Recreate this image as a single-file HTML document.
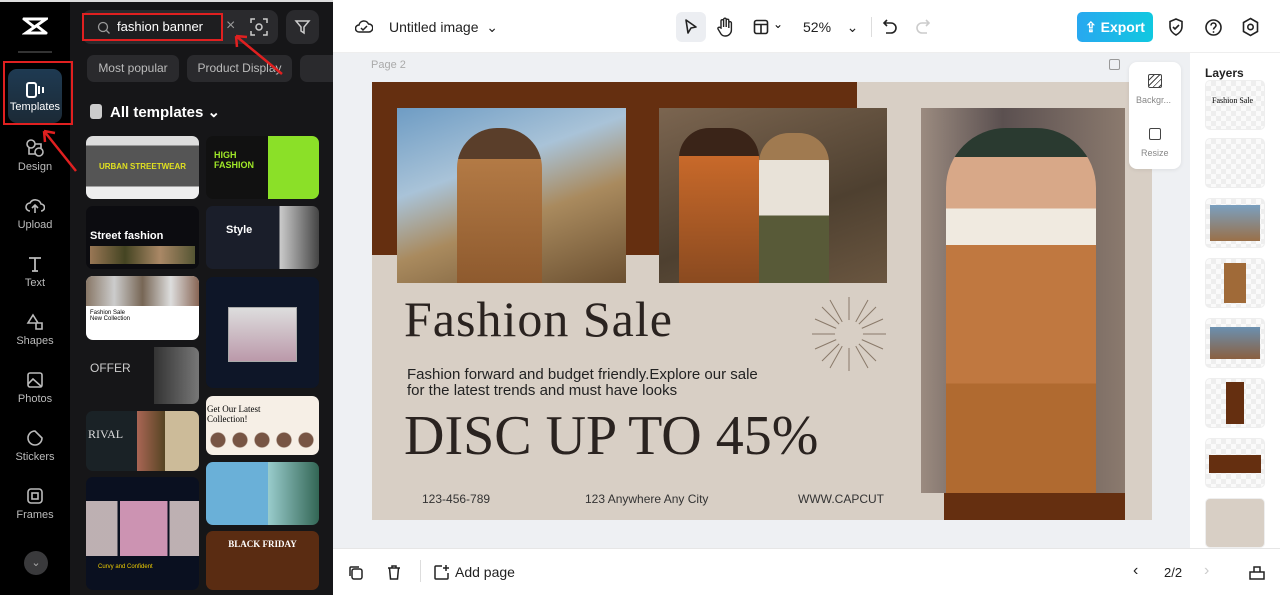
<!DOCTYPE html>
<html><head><meta charset="utf-8"><style>
*{margin:0;padding:0;box-sizing:border-box}
body{width:1280px;height:595px;overflow:hidden;font-family:"Liberation Sans",sans-serif;background:#fff;position:relative}
.a{position:absolute}
.rail{left:0;top:0;width:70px;height:595px;background:#000}
.panel{left:70px;top:0;width:263px;height:595px;background:#161618}
.ri{position:absolute;left:0;width:70px;text-align:center;color:#bbb;font-size:11px}
.ri svg{display:block;margin:0 auto 3px}
.chip{position:absolute;top:55px;height:27px;border-radius:7px;background:#2a2a2d;color:#bbb;font-size:12px;line-height:27px;text-align:center}
.t{position:absolute;border-radius:7px;overflow:hidden}
.top{left:333px;top:0;width:947px;height:53px;background:#fff;border-bottom:1px solid #eee}
.canvas{left:333px;top:53px;width:857px;height:495px;background:#eef0f3}
.bot{left:333px;top:548px;width:947px;height:47px;background:#fff;border-top:1px solid #e6e6e6}
.layers{left:1190px;top:53px;width:90px;height:495px;background:#fff}
.ly{position:absolute;left:1205px;width:60px;height:50px;border-radius:5px;background:repeating-conic-gradient(#eee 0 25%,#fafafa 0 50%) 0 0/10px 10px;border:1px solid #eee}
.red{position:absolute;border:2px solid #e02020}
</style></head><body>
<div class="a rail"></div>
<div class="a panel"></div>
<div class="a" style="left:0;top:0;width:333px;height:2px;background:#ddd"></div>
<svg class="a" style="left:22px;top:16px" width="26" height="20" viewBox="0 0 26 20"><path d="M2 3h22L4 17h20M2 3l9 7M24 17l-9-7" stroke="#fff" stroke-width="3" fill="none" stroke-linecap="round"/></svg>
<div class="a" style="left:18px;top:51px;width:34px;height:2px;background:#333"></div>
<div class="a" style="left:8px;top:69px;width:54px;height:54px;border-radius:9px;background:linear-gradient(#1e3a52,#1c2a36)"></div>
<div class="ri" style="top:82px;color:#fff"><svg width="20" height="16" viewBox="0 0 20 16"><rect x="2" y="1" width="9" height="14" rx="2" stroke="#fff" stroke-width="2" fill="none"/><path d="M14 4v8M18 5v6" stroke="#fff" stroke-width="2"/></svg>Templates</div>
<div class="red" style="left:3px;top:61px;width:70px;height:64px"></div>
<div class="ri" style="top:138px"><svg width="20" height="20" viewBox="0 0 20 20"><circle cx="6" cy="6" r="4" stroke="#bbb" stroke-width="1.6" fill="none"/><circle cx="14" cy="14" r="4" stroke="#bbb" stroke-width="1.6" fill="none"/><path d="M10 6h6v4M4 10v6h6" stroke="#bbb" stroke-width="1.6" fill="none"/></svg>Design</div>
<div class="ri" style="top:196px"><svg width="20" height="20" viewBox="0 0 20 20"><path d="M5 15a4 4 0 010-8 6 6 0 0111 1 3.5 3.5 0 010 7M10 17v-7M7 12l3-3 3 3" stroke="#bbb" stroke-width="1.6" fill="none"/></svg>Upload</div>
<div class="ri" style="top:254px"><svg width="20" height="20" viewBox="0 0 20 20"><path d="M4 4h12M10 4v13M7 17h6" stroke="#bbb" stroke-width="1.8" fill="none"/></svg>Text</div>
<div class="ri" style="top:312px"><svg width="20" height="20" viewBox="0 0 20 20"><path d="M8 3l5 8H3zM11 11h6v6h-6z" stroke="#bbb" stroke-width="1.6" fill="none"/></svg>Shapes</div>
<div class="ri" style="top:370px"><svg width="20" height="20" viewBox="0 0 20 20"><rect x="3" y="3" width="14" height="14" rx="2" stroke="#bbb" stroke-width="1.6" fill="none"/><path d="M3 14l5-5 9 8" stroke="#bbb" stroke-width="1.6" fill="none"/></svg>Photos</div>
<div class="ri" style="top:428px"><svg width="20" height="20" viewBox="0 0 20 20"><path d="M10 3a7 7 0 107 7l-7-7z" stroke="#bbb" stroke-width="1.6" fill="none"/></svg>Stickers</div>
<div class="ri" style="top:486px"><svg width="20" height="20" viewBox="0 0 20 20"><rect x="3" y="3" width="14" height="14" rx="3" stroke="#bbb" stroke-width="1.6" fill="none"/><rect x="7" y="7" width="6" height="6" stroke="#bbb" stroke-width="1.6" fill="none"/></svg>Frames</div>
<div class="a" style="left:24px;top:551px;width:24px;height:24px;border-radius:50%;background:#3a3a3c;color:#aaa;font-size:11px;text-align:center;line-height:24px">⌄</div>
<div class="a" style="left:82px;top:10px;width:196px;height:34px;border-radius:9px;background:#2a2a2d"></div>
<div class="red" style="left:82px;top:13px;width:141px;height:28px;background:#1e1e20"></div>
<svg class="a" style="left:97px;top:21px" width="14" height="14" viewBox="0 0 14 14"><circle cx="6" cy="6" r="4.5" stroke="#999" stroke-width="1.3" fill="none"/><path d="M9.5 9.5l3 3" stroke="#999" stroke-width="1.3"/></svg>
<div class="a" style="left:117px;top:19px;color:#fff;font-size:13px">fashion banner</div>
<div class="a" style="left:226px;top:17px;color:#999;font-size:16px">×</div>
<svg class="a" style="left:250px;top:18px" width="18" height="18" viewBox="0 0 18 18"><path d="M1 5V1h4M13 1h4v4M17 13v4h-4M5 17H1v-4" stroke="#ccc" stroke-width="1.5" fill="none"/><circle cx="9" cy="9" r="3" stroke="#ccc" stroke-width="1.5" fill="none"/></svg>
<div class="a" style="left:286px;top:10px;width:33px;height:34px;border-radius:9px;background:#2a2a2d"></div>
<svg class="a" style="left:294px;top:19px" width="17" height="16" viewBox="0 0 17 16"><path d="M2 2h13l-5 6v6l-3-2V8z" stroke="#ccc" stroke-width="1.5" fill="none"/></svg>
<div class="chip" style="left:87px;width:92px">Most popular</div>
<div class="chip" style="left:187px;width:105px">Product Display</div>
<div class="chip" style="left:300px;width:40px"></div>
<div class="a" style="left:90px;top:104px;width:12px;height:15px;border-radius:3px;background:#ccc"></div>
<div class="a" style="left:110px;top:103px;color:#fff;font-size:15px;font-weight:bold">All templates ⌄</div>
<div class="t" style="left:86px;top:136px;width:113px;height:63px;background:linear-gradient(#ddd 0 15%,#555 15% 80%,#eee 80%)"><div style="color:#e0e020;font-size:8px;font-weight:bold;margin-top:26px;text-align:center">URBAN STREETWEAR</div></div>
<div class="t" style="left:206px;top:136px;width:113px;height:63px;background:linear-gradient(90deg,#111 55%,#8be028 55%)"><div style="color:#a0e828;font-size:9px;font-weight:bold;margin:14px 8px">HIGH<br>FASHION</div></div>
<div class="t" style="left:86px;top:206px;width:113px;height:63px;background:#0c0c10"><div style="color:#fff;font-size:11px;font-weight:bold;margin:24px 4px 0">Street fashion</div><div style="margin:4px;height:18px;background:linear-gradient(90deg,#975,#442,#a86,#553)"></div></div>
<div class="t" style="left:206px;top:206px;width:113px;height:63px;background:linear-gradient(90deg,#1a1e2a 65%,#ccc 65%,#444)"><div style="color:#fff;font-size:11px;font-weight:bold;margin:18px 20px">Style</div></div>
<div class="t" style="left:86px;top:276px;width:113px;height:64px;background:#fff"><div style="height:30px;background:linear-gradient(90deg,#876,#ccc,#765,#ddd,#865)"></div><div style="font-size:6px;margin:4px">Fashion Sale<br>New Collection</div></div>
<div class="t" style="left:206px;top:277px;width:113px;height:111px;background:#0e1628"><div style="margin:30px 22px;height:55px;background:linear-gradient(#ddd,#b9a);border:1px solid #aaa"></div></div>
<div class="t" style="left:86px;top:347px;width:113px;height:57px;background:linear-gradient(90deg,#161618 60%,#333 60%,#777)"><div style="color:#ccc;font-size:12px;margin:14px 4px">OFFER</div></div>
<div class="t" style="left:206px;top:396px;width:113px;height:59px;background:#f6efe6"><div style="font-family:'Liberation Serif',serif;font-size:9px;margin:8px 1px">Get Our Latest<br>Collection!</div><div style="margin:2px 4px;height:16px;background:radial-gradient(circle at 8px 8px,#754 7px,transparent 8px) 0 0/22px 16px"></div></div>
<div class="t" style="left:86px;top:411px;width:113px;height:60px;background:linear-gradient(90deg,#1a2226 45%,#a65 45%,#542 70%,#cb9 70%)"><div style="color:#ddd;font-family:'Liberation Serif',serif;font-size:12px;margin:16px 2px">RIVAL</div></div>
<div class="t" style="left:206px;top:462px;width:113px;height:63px;background:linear-gradient(90deg,#6ab0d8 0 55%,#9cc 55%,#365)"></div>
<div class="t" style="left:86px;top:477px;width:113px;height:113px;background:#0a1020"><div style="margin:24px 0 0;height:55px;background:linear-gradient(90deg,#dcc 0 28%,transparent 28% 30%,#eac 30% 72%,transparent 72% 74%,#dcc 74%);opacity:.85"></div><div style="color:#ec0;font-size:6px;margin:8px 12px">Curvy and Confident</div></div>
<div class="t" style="left:206px;top:531px;width:113px;height:59px;background:#5a2c12"><div style="color:#fff;font-family:'Liberation Serif',serif;font-weight:bold;font-size:9px;margin:8px 0;text-align:center">BLACK FRIDAY</div></div>
<div class="a" style="left:333px;top:276px;width:7px;height:46px;background:#2a2a2d;border-radius:0 4px 4px 0"></div>
<div class="a top"></div>
<svg class="a" style="left:355px;top:18px" width="18" height="16" viewBox="0 0 18 16"><path d="M4 14a3.5 3.5 0 010-7 5 5 0 019.5-1A4 4 0 0114 14z" stroke="#222" stroke-width="1.5" fill="none"/><path d="M6 10l2 2 4-4" stroke="#222" stroke-width="1.5" fill="none"/></svg>
<div class="a" style="left:389px;top:19px;font-size:14px;color:#222">Untitled image &nbsp;⌄</div>
<div class="a" style="left:676px;top:12px;width:30px;height:30px;border-radius:6px;background:#eceef2"></div>
<svg class="a" style="left:684px;top:18px" width="14" height="18" viewBox="0 0 14 18"><path d="M2 2l10 7-5 1-3 5z" stroke="#222" stroke-width="1.6" fill="none" stroke-linejoin="round"/></svg>
<svg class="a" style="left:716px;top:17px" width="18" height="20" viewBox="0 0 18 20"><path d="M5 11V4a1.3 1.3 0 012.6 0v6V2.5a1.3 1.3 0 012.6 0V10V3.5a1.3 1.3 0 012.6 0V11V6a1.3 1.3 0 012.6 0v7a6 6 0 01-6 6H9a5 5 0 01-4-2L2 12a1.3 1.3 0 012-1.5z" stroke="#222" stroke-width="1.4" fill="none"/></svg>
<svg class="a" style="left:753px;top:19px" width="16" height="16" viewBox="0 0 16 16"><rect x="1.5" y="1.5" width="13" height="13" rx="2" stroke="#222" stroke-width="1.6" fill="none"/><path d="M1.5 5.5h13M8 5.5v9" stroke="#222" stroke-width="1.6"/></svg>
<div class="a" style="left:773px;top:17px;font-size:12px">⌄</div>
<div class="a" style="left:803px;top:19px;font-size:14px;color:#222">52% &nbsp;&nbsp;&nbsp;⌄</div>
<div class="a" style="left:871px;top:17px;width:1px;height:20px;background:#ddd"></div>
<svg class="a" style="left:882px;top:18px" width="16" height="18" viewBox="0 0 16 18"><path d="M5 2L2 5l3 3M2 5h7a5 5 0 010 10H4" stroke="#222" stroke-width="1.6" fill="none"/></svg>
<svg class="a" style="left:915px;top:18px" width="16" height="18" viewBox="0 0 16 18"><path d="M11 2l3 3-3 3M14 5H7a5 5 0 000 10h5" stroke="#ccc" stroke-width="1.6" fill="none"/></svg>
<div class="a" style="left:1077px;top:12px;width:76px;height:30px;border-radius:5px;background:linear-gradient(90deg,#28a8f0,#10c8e0);color:#fff;font-size:14px;font-weight:bold;line-height:30px;text-align:center">⇪ Export</div>
<svg class="a" style="left:1167px;top:17px" width="18" height="20" viewBox="0 0 18 20"><path d="M9 2l6 2.5v5c0 4-3 7-6 8.5C6 16.5 3 13.5 3 9.5v-5z" stroke="#222" stroke-width="1.6" fill="none"/><path d="M6 10l2 2 4-4" stroke="#222" stroke-width="1.6" fill="none"/></svg>
<svg class="a" style="left:1204px;top:18px" width="19" height="19" viewBox="0 0 19 19"><circle cx="9.5" cy="9.5" r="7.5" stroke="#222" stroke-width="1.6" fill="none"/><path d="M7 7.5a2.5 2.5 0 015 0c0 1.8-2.5 2-2.5 4" stroke="#222" stroke-width="1.6" fill="none"/><circle cx="9.5" cy="14" r=".9" fill="#222"/></svg>
<svg class="a" style="left:1241px;top:17px" width="19" height="20" viewBox="0 0 19 20"><path d="M9.5 1.5l7 4v9l-7 4-7-4v-9z" stroke="#222" stroke-width="1.6" fill="none"/><circle cx="9.5" cy="10" r="2.7" stroke="#222" stroke-width="1.6" fill="none"/></svg>
<div class="a canvas"></div>
<div class="a" style="left:371px;top:59px;font-size:11px;color:#aaa">Page 2</div>
<div class="a" style="left:1109px;top:59px;width:11px;height:11px;border:1.5px solid #999;border-radius:2px"></div>
<div class="a" style="left:372px;top:82px;width:780px;height:438px;background:#d8cfc5"></div>
<div class="a" style="left:372px;top:82px;width:485px;height:173px;background:#652f10"></div>
<div class="a" style="left:944px;top:140px;width:181px;height:380px;background:#652f10"></div>
<div class="a" style="left:397px;top:108px;width:229px;height:175px;background:linear-gradient(160deg,#6e9cc4 0%,#a9c3d8 35%,#a98a5e 60%,#6b5031 100%)"><div style="position:absolute;left:60px;top:20px;width:85px;height:155px;background:linear-gradient(#5a3e2a 0 20%,#b37a45 20%,#8e5a2e);border-radius:40px 40px 0 0"></div></div>
<div class="a" style="left:659px;top:108px;width:228px;height:175px;background:linear-gradient(160deg,#7b6550,#4e4030 60%,#6a5640)"><div style="position:absolute;left:20px;top:20px;width:80px;height:155px;background:linear-gradient(#3a2418 0 18%,#c8692a 18%,#8a4a20);border-radius:30px 30px 0 0"></div><div style="position:absolute;left:100px;top:25px;width:70px;height:150px;background:linear-gradient(#a07a50 0 18%,#e8e2d8 18% 55%,#585a38 55%);border-radius:30px 30px 0 0"></div></div>
<div class="a" style="left:921px;top:108px;width:204px;height:385px;background:linear-gradient(90deg,#9b8b80,#5b5050 40%,#8b7a6e)"><div style="position:absolute;left:25px;top:20px;width:150px;height:365px;background:linear-gradient(#2a3a30 0 8%,#d8a888 8% 22%,#f0eae0 22% 32%,#c07840 32% 70%,#b06a30 70%);border-radius:60px 60px 0 0"></div></div>
<div class="a" style="left:404px;top:290px;font-family:'Liberation Serif',serif;font-size:50px;color:#2a2320;letter-spacing:1px">Fashion Sale</div>
<svg class="a" style="left:810px;top:295px" width="78" height="78" viewBox="0 0 78 78"><g stroke="#8a7a6a" stroke-width="1"><path d="M39 2v74M2 39h74M12 12l54 54M66 12L12 66M20 5l38 68M58 5L20 73M5 24l68 30M73 24L5 54"/></g><circle cx="39" cy="39" r="14" fill="#d8cfc5"/></svg>
<div class="a" style="left:407px;top:367px;font-size:15px;color:#222;line-height:16px">Fashion forward and budget friendly.Explore our sale<br>for the latest trends and must have looks</div>
<div class="a" style="left:404px;top:404px;font-family:'Liberation Serif',serif;font-size:56px;color:#2a2320">DISC UP TO 45%</div>
<div class="a" style="left:422px;top:492px;font-size:12px;color:#333">123-456-789</div>
<div class="a" style="left:585px;top:492px;font-size:12px;color:#333">123 Anywhere Any City</div>
<div class="a" style="left:798px;top:492px;font-size:12px;color:#333">WWW.CAPCUT</div>
<div class="a" style="left:1129px;top:62px;width:52px;height:107px;background:#fff;border-radius:8px;box-shadow:0 1px 4px rgba(0,0,0,.08)"></div>
<div class="a" style="left:1148px;top:74px;width:14px;height:14px;border:1.5px solid #444;border-radius:2px;background:repeating-linear-gradient(135deg,#fff 0 3px,#444 3px 4px)"></div>
<div class="a" style="left:1136px;top:95px;font-size:9px;color:#888">Backgr...</div>
<div class="a" style="left:1149px;top:128px;width:12px;height:12px;border:1.5px solid #444;border-radius:2px"></div>
<div class="a" style="left:1141px;top:148px;font-size:9px;color:#888">Resize</div>
<div class="a layers"></div>
<div class="a" style="left:1205px;top:66px;font-size:12px;font-weight:bold;color:#222">Layers</div>
<div class="ly" style="top:80px"><div style="font-family:'Liberation Serif',serif;font-size:8px;margin:15px 6px">Fashion Sale</div></div>
<div class="ly" style="top:138px"></div>
<div class="ly" style="top:198px"><div style="margin:6px 4px;height:36px;background:linear-gradient(#7aa0c0,#9a7048)"></div></div>
<div class="ly" style="top:258px"><div style="margin:4px 18px;height:40px;background:#a06a38"></div></div>
<div class="ly" style="top:318px"><div style="margin:8px 4px;height:32px;background:linear-gradient(#6a90b0,#8a6040)"></div></div>
<div class="ly" style="top:378px"><div style="margin:3px 20px;height:42px;background:#652f10"></div></div>
<div class="ly" style="top:438px"><div style="margin:16px 3px;height:18px;background:#652f10"></div></div>
<div class="ly" style="top:498px;background:#d8cfc5"></div>
<div class="a bot"></div>
<svg class="a" style="left:348px;top:565px" width="16" height="16" viewBox="0 0 16 16"><rect x="4" y="4" width="10" height="10" rx="2" stroke="#222" stroke-width="1.5" fill="none"/><path d="M2 11V3a1 1 0 011-1h8" stroke="#222" stroke-width="1.5" fill="none"/></svg>
<svg class="a" style="left:386px;top:564px" width="16" height="17" viewBox="0 0 16 17"><path d="M2 4h12M6 4V2h4v2M3.5 4l1 11h7l1-11" stroke="#222" stroke-width="1.5" fill="none"/></svg>
<div class="a" style="left:420px;top:560px;width:1px;height:22px;background:#ddd"></div>
<svg class="a" style="left:433px;top:564px" width="17" height="17" viewBox="0 0 17 17"><path d="M9 2H3a1 1 0 00-1 1v11a1 1 0 001 1h11a1 1 0 001-1V9M13 1v6M10 4h6" stroke="#222" stroke-width="1.5" fill="none"/></svg>
<div class="a" style="left:455px;top:564px;font-size:14px;color:#222">Add page</div>
<div class="a" style="left:1133px;top:562px;font-size:16px;color:#222">‹</div>
<div class="a" style="left:1164px;top:565px;font-size:13px;color:#222">2/2</div>
<div class="a" style="left:1204px;top:562px;font-size:16px;color:#ccc">›</div>
<svg class="a" style="left:1249px;top:565px" width="16" height="15" viewBox="0 0 16 15"><path d="M1 7h14v7H1zM5 7V2h6v5" stroke="#222" stroke-width="1.5" fill="none"/></svg>
<!-- red arrows on top -->
<svg class="a" style="left:228px;top:32px" width="60" height="45"><path d="M8 4l46 38M8 4l1 11M8 4l11 1" stroke="#e02020" stroke-width="2.5" fill="none"/></svg>
<svg class="a" style="left:40px;top:128px" width="40" height="48"><path d="M4 3l32 40M4 3l1 11M4 3l11 2" stroke="#e02020" stroke-width="2.5" fill="none"/></svg>
</body></html>
